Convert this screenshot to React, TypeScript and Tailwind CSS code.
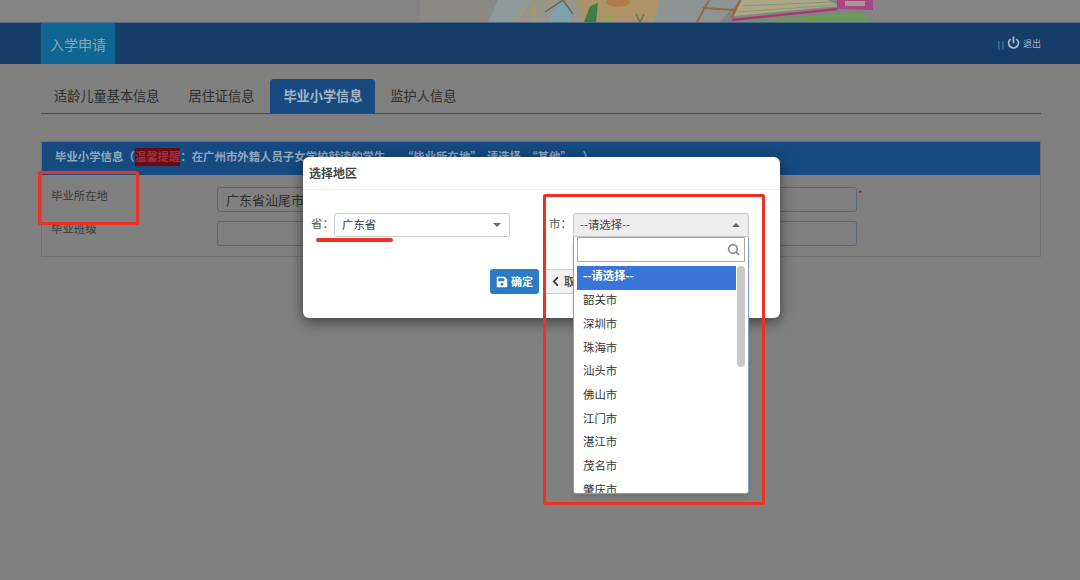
import { Power, Search } from 'lucide-react';
import { FaChevronLeft, FaSave } from 'react-icons/fa';

const cities = ['韶关市', '深圳市', '珠海市', '汕头市', '佛山市', '江门市', '湛江市', '茂名市', '肇庆市'];

function Illustration() {
  return (
    <svg viewBox="0 0 480 22" className="w-[480px] h-[22px] shrink-0">
      <rect x="0" y="0" width="78" height="22" fill="#8a8984" />
      <path d="M78 0 H112 L100 22 H68 Z" fill="#8f9a9c" />
      <path d="M112 0 H240 L232 22 H100 Z" fill="#98968a" />
      <path d="M96 20 L106 3 H116 M102 12 H115 M115 3 V22" stroke="#a69a62" strokeWidth="1.5" fill="none" />
      <path d="M131 22 V12 L142 3 L150 12 V22 Z" fill="#7ba3b0" />
      <path d="M125 12 L143 0 L153 14" stroke="#57626c" strokeWidth="1.3" fill="none" />
      <path d="M156 0 H250 L238 22 H164 Z" fill="#ad9468" />
      <ellipse cx="198" cy="2" rx="12" ry="5" fill="#b07c4a" />
      <path d="M164 22 L170 6 L178 3 L176 22 Z" fill="#3f7f46" />
      <path d="M184 22 L188 13 L192 22 Z" fill="#8ea654" />
      <path d="M216 14 L220 22 M224 14 L220 22" stroke="#5f6f45" strokeWidth="1.2" />
      <path d="M240 0 H320 L300 22 H234 Z" fill="#8e9494" />
      <path d="M289 0 L277 22 M283 8 L315 10" stroke="#8f6c3a" strokeWidth="1.8" fill="none" />
      <path d="M320 0 L312 17" stroke="#a8602e" strokeWidth="1.8" />
      <path d="M312 22 L440 12 L453 22 Z" fill="#6f9a5a" />
      <path d="M314 16 L322 0 H407 L420 6 Z" fill="#a9a98a" />
      <path d="M322 6 L412 2 M318 12 L416 5" stroke="#8f9470" strokeWidth="1" fill="none" />
      <path d="M312 20 L417 9" stroke="#a63a6e" strokeWidth="2.4" fill="none" />
      <path d="M417 0 H453 V10 L417 9 Z" fill="#a9467f" />
      <rect x="425" y="1" width="20" height="5" fill="#a8949f" />
    </svg>
  );
}

export default function App() {
  return (
    <div className="relative w-[1080px] h-[580px] overflow-hidden bg-[#808080] text-[13.2px] text-[#2e2e2e] font-['Noto_Sans_CJK_SC',sans-serif]">
      <div className="h-[22px] bg-[#848484] flex justify-end pr-[180px]">
        <Illustration />
      </div>
      <header className="h-[42px] bg-[#163d67] border-t border-[#4e6a88] pl-[41px] pr-[39px] flex items-center justify-between">
        <div className="h-full w-[74px] bg-[#0f6690] flex items-center justify-center text-sm text-[#8fa5b5]">入学申请</div>
        <div className="flex items-center gap-[3px] text-[9px] text-[#a9b5c2]">
          <span className="pt-[3px] text-[8px]">| |</span>
          <Power size={13} strokeWidth={3.5} className="mb-[3px]" />
          <span>退出</span>
        </div>
      </header>

      <main className="pl-[41px] pr-[39px]">
        <nav className="mt-[15px] h-[35px] flex gap-[3px] border-b border-[#2a5078]">
          <div className="px-[13px] flex items-center">适龄儿童基本信息</div>
          <div className="px-[13px] flex items-center">居住证信息</div>
          <div className="w-[105px] flex items-center justify-center rounded-t bg-[#164a80] font-bold text-[#a4b4c4]">毕业小学信息</div>
          <div className="px-[12px] flex items-center">监护人信息</div>
        </nav>

        <section className="mt-[27px] h-[116px] border border-[#707070]">
          <div className="h-[33px] bg-[#164a80] px-[13px] pb-[3px] flex items-center text-[11.4px] font-bold text-[#93a7ba] whitespace-pre">
            毕业小学信息（<span className="bg-[#6b0a14] text-[#a03040]">温馨提醒</span>：在广州市外籍人员子女学校就读的学生，  “毕业所在地”  请选择  “其他”  。）
          </div>
          <div className="pt-[12px] pl-[9px] flex flex-col gap-[9px] text-[11.4px]">
            <div className="flex items-start">
              <span className="w-[166px] pt-[1px] leading-[14px] text-[#3a3a3a]">毕业所在地</span>
              <div className="w-[640px] h-[25px] border border-[#55687f] rounded-[3px] pl-[8px] flex items-center text-[13px]">广东省汕尾市地区</div>
              <span className="ml-[1px] leading-[14px] text-[#8a2a2a] text-[10px]">*</span>
            </div>
            <div className="flex items-start">
              <span className="w-[166px] leading-[14px] text-[#3a3a3a]">毕业班级</span>
              <div className="w-[640px] h-[25px] border border-[#55687f] rounded-[3px]" />
            </div>
          </div>
        </section>
      </main>

      {/* modal */}
      <div className="absolute left-[303px] top-[157px] w-[477px] h-[161px] bg-white rounded-md shadow-[0_4px_14px_rgba(0,0,0,0.5)]">
        <div className="h-[33px] pl-[6px] flex items-center border-b border-[#eeeeee] text-[12px] font-bold text-[#444444]">选择地区</div>
        <div className="mt-[23px] flex text-[11.4px] text-[#555555]">
          <div className="flex items-start pl-[8px]">
            <span className="w-[23px] leading-[20px]">省：</span>
            <div className="w-[176px] h-[24px] border border-[#cccccc] rounded-[3px] pl-[7px] pr-[8px] pb-[1px] flex items-center justify-between text-[#333333]">
              广东省
              <span className="w-0 h-0 border-x-[4px] border-x-transparent border-t-[4px] border-t-[#666666]" />
            </div>
          </div>
          <div className="relative flex items-start ml-[39px]">
            <span className="w-[24px] leading-[20px]">市：</span>
            <div className="relative w-[176px] h-[24px] border border-[#c4c4c4] rounded-t-[3px] bg-[#eeeeee] pl-[6px] pr-[8px] pb-[1px] flex items-center justify-between text-[#444444]">
              --请选择--
              <span className="w-0 h-0 border-x-[4px] border-x-transparent border-b-[4px] border-b-[#666666]" />
              <div className="absolute z-10 left-[-1px] top-[23px] w-[176px] h-[257px] bg-white border border-[#7f9fcf] border-t-0 rounded-b-[3px] shadow-md overflow-hidden px-[3px]">
                <div className="h-[25px] border border-[#aaaaaa] flex items-center justify-end pr-[4px] text-[#888888]">
                  <Search size={13} strokeWidth={3} />
                </div>
                <div className="mt-[4px] flex gap-[1px]">
                  <ul className="w-[159px] shrink-0">
                    <li className="h-[24px] bg-[#3875d7] pl-[6px] pb-[5px] flex items-center font-bold text-[#ffffff]">--请选择--</li>
                    {cities.map((c) => (
                      <li key={c} className="h-[23.7px] pl-[6px] pb-[4px] flex items-center text-[#333333]">{c}</li>
                    ))}
                  </ul>
                  <div className="w-[8px] h-[101px] rounded-full bg-[#c8c8c8]" />
                </div>
              </div>
            </div>
          </div>
        </div>
        <div className="mt-[32px] pl-[187px] flex gap-[4px] text-[11px] font-bold">
          <button className="w-[49px] h-[25px] rounded-[3px] bg-[#2a7cc7] text-white flex items-center justify-center gap-[3px]">
            <FaSave size={12} />确定
          </button>
          <button className="w-[60px] h-[25px] rounded-[3px] border border-[#cccccc] bg-[#f2f2f2] text-[#555555] pl-[6px] flex items-center gap-[3px]">
            <FaChevronLeft size={11} className="text-[#333333]" />取消
          </button>
        </div>
      </div>

      {/* red annotations */}
      <div className="absolute left-[38px] top-[171px] w-[101px] h-[54px] border-[3px] border-[#ea3323] rounded-[2px]" />
      <div className="absolute left-[316px] top-[238px] w-[77px] h-[4px] bg-[#ea3323] rounded-full" />
      <div className="absolute z-20 left-[543px] top-[194px] w-[222px] h-[311px] border-[3px] border-[#ea3323] rounded-[2px]" />
    </div>
  );
}
